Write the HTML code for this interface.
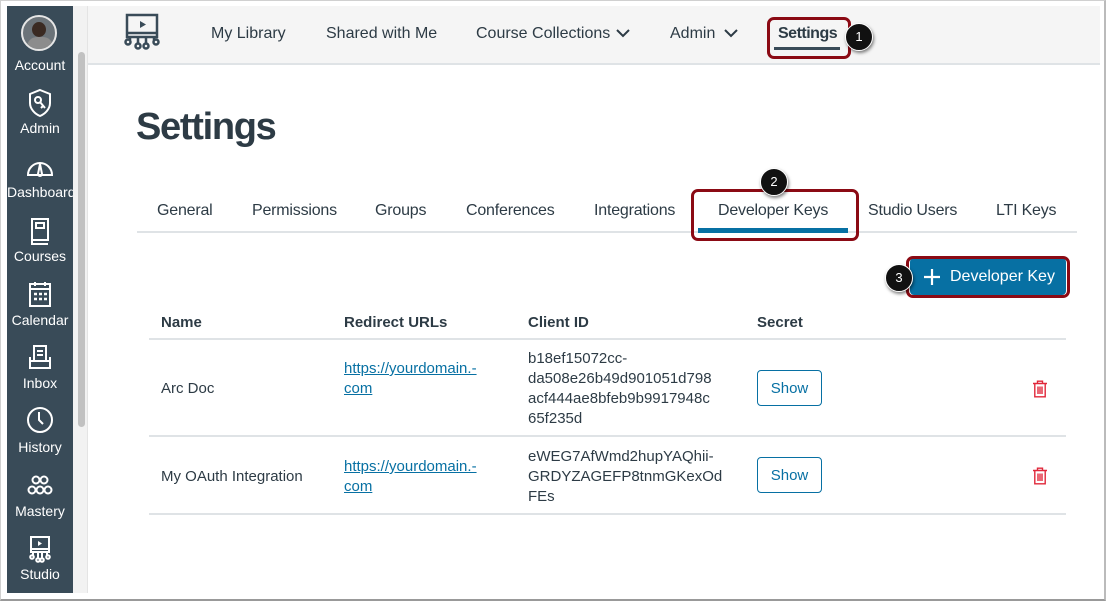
<!DOCTYPE html>
<html><head><meta charset="utf-8"><style>
*{margin:0;padding:0;box-sizing:border-box}
body{width:1106px;height:601px;background:#fff;position:relative;overflow:hidden;font-family:"Liberation Sans",sans-serif;color:#2D3B45;font-size:15px}
.a{position:absolute;white-space:nowrap}
#frame{position:absolute;left:0;top:0;width:1106px;height:601px;border:1px solid #d0d0d0;border-bottom:2px solid #999;border-right:2px solid #bbb}
#side{position:absolute;left:7px;top:6px;width:66px;height:587px;background:#394B58}
.sl{position:absolute;left:7px;width:66px;text-align:center;color:#fff;font-size:14px}
.si{position:absolute;left:22px;width:36px;height:30px}
#sb{position:absolute;left:73px;top:6px;width:15px;height:587px;background:#f2f2f2;border-right:1px solid #e4e4e4}
#thumb{position:absolute;left:78px;top:52px;width:7px;height:375px;background:#c1c1c1;border-radius:4px}
#top{position:absolute;left:88px;top:6px;width:1012px;height:59px;background:#f5f5f5;border-bottom:2px solid #dfe3e6}
.nav{top:25px;font-size:16px;color:#2D3B45}
.tab{top:202px;font-size:16px;letter-spacing:-0.2px}
.red{position:absolute;border:3px solid #8B0A14;border-radius:7px}
.badge{position:absolute;width:28px;height:28px;border-radius:50%;background:#111;color:#fff;font-size:13px;text-align:center;line-height:26px;border:1.5px solid #fff;box-shadow:1px 2px 3px rgba(0,0,0,.5)}
.hl{position:absolute;left:149px;width:917px;height:2px;background:#dfe3e6}
.th{top:314px;font-weight:bold;font-size:15px}
.td{font-size:15px;line-height:20px}
.lnk{color:#0770A3;text-decoration:underline;font-size:15px;line-height:20px}
.show{position:absolute;left:757px;width:65px;height:36px;border:1px solid #0770A3;border-radius:4px;color:#0770A3;text-align:center;line-height:34px;font-size:15px}
</style></head><body>
<div id="frame"></div>
<div id="side"></div>
<div class="a" style="left:21px;top:15px;width:36px;height:36px;border-radius:50%;background:#6b7379;border:2px solid #e6e6e6;overflow:hidden"><div style="position:absolute;left:9px;top:5px;width:14px;height:15px;border-radius:50%;background:#3a2a22"></div><div style="position:absolute;left:4px;top:20px;width:26px;height:16px;border-radius:10px 10px 0 0;background:#8c8c8c"></div></div>
<div class="sl" style="top:57px">Account</div>
<svg class="si" style="top:88px" viewBox="0 0 36 30" fill="none" stroke="#fff" stroke-width="2"><path d="M18 2 L28 6 V15 C28 21 23 26 18 28 C13 26 8 21 8 15 V6 Z"/><circle cx="16" cy="12" r="3"/><path d="M18 14 L23 20 M21 18 L19 20"/></svg>
<div class="sl" style="top:120px">Admin</div>
<svg class="si" style="top:153px" viewBox="0 0 36 30" fill="none" stroke="#fff" stroke-width="2"><path d="M6 22 A12 12 0 1 1 30 22 Z"/><path d="M18 11 L20 21 A2 2 0 0 1 16 21 Z"/></svg>
<div class="sl" style="top:184px">Dashboard</div>
<svg class="si" style="top:216px" viewBox="0 0 36 30" fill="none" stroke="#fff" stroke-width="2"><path d="M10 3 H26 V24 H10 Z M10 24 V28 H26"/><rect x="14" y="7" width="8" height="5"/></svg>
<div class="sl" style="top:248px">Courses</div>
<svg class="si" style="top:280px" viewBox="0 0 36 30" fill="none" stroke="#fff" stroke-width="2"><rect x="8" y="4" width="20" height="22"/><path d="M8 9 H28 M13 2 V6 M23 2 V6"/><path d="M12 14h3M17 14h3M22 14h3M12 19h3M17 19h3M22 19h3" stroke-width="2.5"/></svg>
<div class="sl" style="top:312px">Calendar</div>
<svg class="si" style="top:343px" viewBox="0 0 36 30" fill="none" stroke="#fff" stroke-width="2"><path d="M12 3 H24 V18 H12 Z M15 8h6M15 12h6"/><path d="M8 14 V25 H28 V14 M8 18 H14 M22 18 H28"/></svg>
<div class="sl" style="top:375px">Inbox</div>
<svg class="si" style="top:405px" viewBox="0 0 36 30" fill="none" stroke="#fff" stroke-width="2"><circle cx="18" cy="15" r="12"/><path d="M17 7 V15 L21 19"/></svg>
<div class="sl" style="top:439px">History</div>
<svg class="si" style="top:470px" viewBox="0 0 36 30" fill="none" stroke="#fff" stroke-width="2"><circle cx="14" cy="10" r="3.5"/><circle cx="22" cy="10" r="3.5"/><circle cx="10" cy="20" r="3.5"/><circle cx="18" cy="20" r="3.5"/><circle cx="26" cy="20" r="3.5"/></svg>
<div class="sl" style="top:503px">Mastery</div>
<svg class="si" style="top:534px" viewBox="0 0 36 30" fill="none" stroke="#fff" stroke-width="2"><rect x="9" y="3" width="18" height="15"/><path d="M9 15 H27"/><path d="M16 7 L20 9.5 L16 12 Z" fill="#fff" stroke="none"/><path d="M11 21 V18 M16 24 V18 M20 24 V18 M25 21 V18"/><circle cx="10" cy="23" r="1.8"/><circle cx="16" cy="26" r="1.8"/><circle cx="20" cy="26" r="1.8"/><circle cx="26" cy="23" r="1.8"/></svg>
<div class="sl" style="top:566px">Studio</div>
<div id="sb"></div><div id="thumb"></div>
<div id="top"></div>
<svg class="a" style="left:122px;top:13px" width="40" height="40" viewBox="0 0 40 40" fill="none" stroke="#394B58" stroke-width="2.5"><rect x="5" y="2" width="30" height="22"/><path d="M5 20 H35"/><path d="M18 8 L24 11.5 L18 15 Z" fill="#394B58" stroke="none"/><path d="M8 27 V24 M16 31 V24 M24 31 V24 M32 27 V24"/><circle cx="6" cy="29" r="2.5"/><circle cx="16" cy="33" r="2.5"/><circle cx="24" cy="33" r="2.5"/><circle cx="34" cy="29" r="2.5"/></svg>
<div class="a nav" style="left:211px">My Library</div>
<div class="a nav" style="left:326px">Shared with Me</div>
<div class="a nav" style="left:476px">Course Collections</div>
<svg class="a" style="left:616px;top:28px" width="14" height="10" viewBox="0 0 14 10" fill="none" stroke="#2D3B45" stroke-width="2"><path d="M1 2 L7 8 L13 2"/></svg>
<div class="a nav" style="left:670px">Admin</div>
<svg class="a" style="left:724px;top:28px" width="14" height="10" viewBox="0 0 14 10" fill="none" stroke="#2D3B45" stroke-width="2"><path d="M1 2 L7 8 L13 2"/></svg>
<div class="a nav" style="left:778px;font-weight:bold;letter-spacing:-0.5px">Settings</div>
<div class="a" style="left:774px;top:47px;width:66px;height:3px;background:#394B58"></div>
<div class="red" style="left:767px;top:17px;width:84px;height:42px"></div>
<div class="badge" style="left:845px;top:23px">1</div>
<div class="a" style="left:136px;top:106px;font-size:38px;font-weight:bold;color:#2D3B45;letter-spacing:-1.3px">Settings</div>
<div class="a tab" style="left:157px">General</div>
<div class="a tab" style="left:252px">Permissions</div>
<div class="a tab" style="left:375px">Groups</div>
<div class="a tab" style="left:466px">Conferences</div>
<div class="a tab" style="left:594px">Integrations</div>
<div class="a tab" style="left:718px">Developer Keys</div>
<div class="a tab" style="left:868px">Studio Users</div>
<div class="a tab" style="left:996px">LTI Keys</div>
<div class="a" style="left:137px;top:231px;width:940px;height:2px;background:#dfe3e6"></div>
<div class="a" style="left:698px;top:228px;width:150px;height:5px;background:#0770A3"></div>
<div class="red" style="left:691px;top:189px;width:168px;height:52px"></div>
<div class="badge" style="left:760px;top:168px">2</div>
<div class="a" style="left:910px;top:258px;width:156px;height:37px;background:#0770A3;border-radius:4px;color:#fff;font-size:16px;line-height:38px;padding-left:40px">Developer Key</div>
<svg class="a" style="left:922px;top:267px" width="20" height="20" viewBox="0 0 20 20" stroke="#fff" stroke-width="2.2"><path d="M10 2 V18 M2 10 H18"/></svg>
<div class="red" style="left:906px;top:256px;width:164px;height:42px"></div>
<div class="badge" style="left:885px;top:264px">3</div>
<div class="a th" style="left:161px">Name</div>
<div class="a th" style="left:344px">Redirect URLs</div>
<div class="a th" style="left:528px">Client ID</div>
<div class="a th" style="left:757px">Secret</div>
<div class="hl" style="top:338px"></div>
<div class="a td" style="left:161px;top:379px">Arc Doc</div>
<div class="a lnk" style="left:344px;top:359px">https://yourdomain.-<br>com</div>
<div class="a td" style="left:528px;top:349px">b18ef15072cc-<br>da508e26b49d901051d798<br>acf444ae8bfeb9b9917948c<br>65f235d</div>
<div class="show" style="top:370px;line-height:36px">Show</div>
<svg class="a" style="left:1032px;top:380px" width="16" height="18" viewBox="0 0 16 18" fill="none" stroke="#E0273A" stroke-width="1.4"><path d="M1 3.5 H15 M5.5 3.5 V1.2 H10.5 V3.5 M2.8 3.5 V16.8 H13.2 V3.5 M6 6.5 V14 M8 6.5 V14 M10 6.5 V14"/></svg>
<div class="hl" style="top:435px"></div>
<div class="a td" style="left:161px;top:467px">My OAuth Integration</div>
<div class="a lnk" style="left:344px;top:457px">https://yourdomain.-<br>com</div>
<div class="a td" style="left:528px;top:447px">eWEG7AfWmd2hupYAQhii-<br>GRDYZAGEFP8tnmGKexOd<br>FEs</div>
<div class="show" style="top:457px;line-height:36px">Show</div>
<svg class="a" style="left:1032px;top:467px" width="16" height="18" viewBox="0 0 16 18" fill="none" stroke="#E0273A" stroke-width="1.4"><path d="M1 3.5 H15 M5.5 3.5 V1.2 H10.5 V3.5 M2.8 3.5 V16.8 H13.2 V3.5 M6 6.5 V14 M8 6.5 V14 M10 6.5 V14"/></svg>
<div class="hl" style="top:513px"></div>
</body></html>
